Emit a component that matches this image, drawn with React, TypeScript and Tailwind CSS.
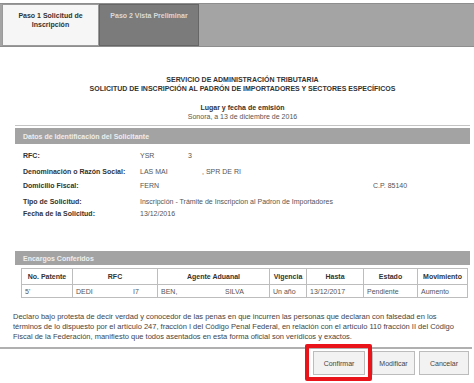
import React from 'react';

const cols = [
  { label: 'No. Patente', w: 'w-[51px]' },
  { label: 'RFC', w: 'w-[85px]' },
  { label: 'Agente Aduanal', w: 'w-[112px]' },
  { label: 'Vigencia', w: 'w-[37px]' },
  { label: 'Hasta', w: 'w-[57px]' },
  { label: 'Estado', w: 'w-[54px]' },
  { label: 'Movimiento', w: 'w-[50px]' },
];

function Row({ label, children, className = '' }: { label: string; children: React.ReactNode; className?: string }) {
  return (
    <div className={`flex items-center h-[10px] ${className}`}>
      <div className="w-[117px] font-bold text-[#333]">{label}</div>
      <div className="flex-1 text-[#555]">{children}</div>
    </div>
  );
}

export default function App() {
  return (
    <div className="w-[474px] h-[383px] bg-white overflow-hidden font-['Liberation_Sans',Arial,sans-serif] text-[7px] leading-[9px] text-[#333]">
      {/* tabs */}
      <div className="mt-[3px] h-[44px] flex bg-[#a4a4a4] border-y border-[#8e8e8e]">
        <div className="ml-[2px] w-[97px] bg-[#f6f6f6] border border-[#9a9a9a] pt-[6px] text-center font-bold text-[#333]">
          Paso 1 Solicitud de
          <br />
          Inscripción
        </div>
        <div className="w-[100px] bg-[#7b7b7b] border border-[#666] pt-[6px] text-center font-bold text-[#d9d9d9]">
          Paso 2 Vista Preliminar
        </div>
      </div>

      {/* heading */}
      <div className="pl-[15px] pr-[4px]">
        <div className="mt-[28px] text-center font-bold text-[#333]">
          SERVICIO DE ADMINISTRACIÓN TRIBUTARIA
          <br />
          SOLICITUD DE INSCRIPCIÓN AL PADRÓN DE IMPORTADORES Y SECTORES ESPECÍFICOS
        </div>
        <div className="mt-[10px] text-center">
          <div className="font-bold">Lugar y fecha de emisión</div>
          <div className="text-[#555]">Sonora, a 13 de diciembre de 2016</div>
        </div>

        <div className="mt-[4px] h-px bg-[#c4c4c4]" />

        {/* datos */}
        <div className="mt-[2px] h-[16px] bg-[#a3a3a3] flex items-center pl-[8px] text-[#eee] font-bold">
          Datos de Identificación del Solicitante
        </div>
        <div className="pl-[8px] pt-[6px]">
          <Row label="RFC:">
            <span className="inline-block w-[48px]">YSR</span>3
          </Row>
          <Row label="Denominación o Razón Social:" className="mt-[6px]">
            <span className="inline-block w-[62px]">LAS MAI</span>, SPR DE RI
          </Row>
          <Row label="Domicilio Fiscal:" className="mt-[4px]">
            <div className="flex">
              <span className="w-[233px]">FERN</span>
              <span>C.P. 85140</span>
            </div>
          </Row>
          <Row label="Tipo de Solicitud:" className="mt-[6px]">
            Inscripción - Trámite de Inscripcion al Padron de Importadores
          </Row>
          <Row label="Fecha de la Solicitud:" className="mt-[2px]">
            13/12/2016
          </Row>
        </div>

        {/* encargos */}
        <div className="mt-[33px] h-[14px] bg-[#a3a3a3] flex items-center pl-[8px] text-[#eee] font-bold">
          Encargos Conferidos
        </div>
        <table className="mt-[3px] ml-[6px] border-collapse text-[7px]">
          <thead>
            <tr className="h-[16px]">
              {cols.map((c) => (
                <th key={c.label} className={`${c.w} border border-[#bdbdbd] font-bold text-[#333] text-center p-0`}>
                  {c.label}
                </th>
              ))}
            </tr>
          </thead>
          <tbody>
            <tr className="h-[13px] text-[#555]">
              <td className="border border-[#bdbdbd] pl-[3px]">5'</td>
              <td className="border border-[#bdbdbd] pl-[3px]">
                <div className="flex">
                  <span className="w-[57px]">DEDI</span>I7
                </div>
              </td>
              <td className="border border-[#bdbdbd] pl-[3px]">
                <div className="flex">
                  <span className="w-[64px]">BEN,</span>SILVA
                </div>
              </td>
              <td className="border border-[#bdbdbd] pl-[3px]">Un año</td>
              <td className="border border-[#bdbdbd] pl-[3px]">13/12/2017</td>
              <td className="border border-[#bdbdbd] pl-[3px]">Pendiente</td>
              <td className="border border-[#bdbdbd] pl-[3px]">Aumento</td>
            </tr>
          </tbody>
        </table>
      </div>

      {/* declaration */}
      <p className="mt-[14px] pl-[13px] text-[7.5px] leading-[10px] text-[#444] whitespace-nowrap">
        Declaro bajo protesta de decir verdad y conocedor de las penas en que incurren las personas que declaran con falsedad en los
        <br />
        términos de lo dispuesto por el artículo 247, fracción I del Código Penal Federal, en relación con el artículo 110 fracción II del Código
        <br />
        Fiscal de la Federación, manifiesto que todos asentados en esta forma oficial son verídicos y exactos.
      </p>

      <div className="mt-[5px] mr-[2px] h-[2px] bg-[#b0b0b0]" />

      {/* buttons */}
      <div className="mt-[2px] flex justify-end pr-[5px] text-[#444]">
        <div className="relative">
          <button className="w-[52px] h-[24px] bg-[#f2f2f2] border border-[#bcbcbc]">Confirmar</button>
          <div className="absolute -left-[8px] -right-[7px] -top-[7px] -bottom-[6px] border-[4px] border-[#e8141a] rounded-[2px]" />
        </div>
        <button className="ml-[7px] w-[43px] h-[24px] bg-[#f2f2f2] border border-[#bcbcbc]">Modificar</button>
        <button className="ml-[4px] w-[50px] h-[24px] bg-[#f2f2f2] border border-[#bcbcbc]">Cancelar</button>
      </div>
    </div>
  );
}
